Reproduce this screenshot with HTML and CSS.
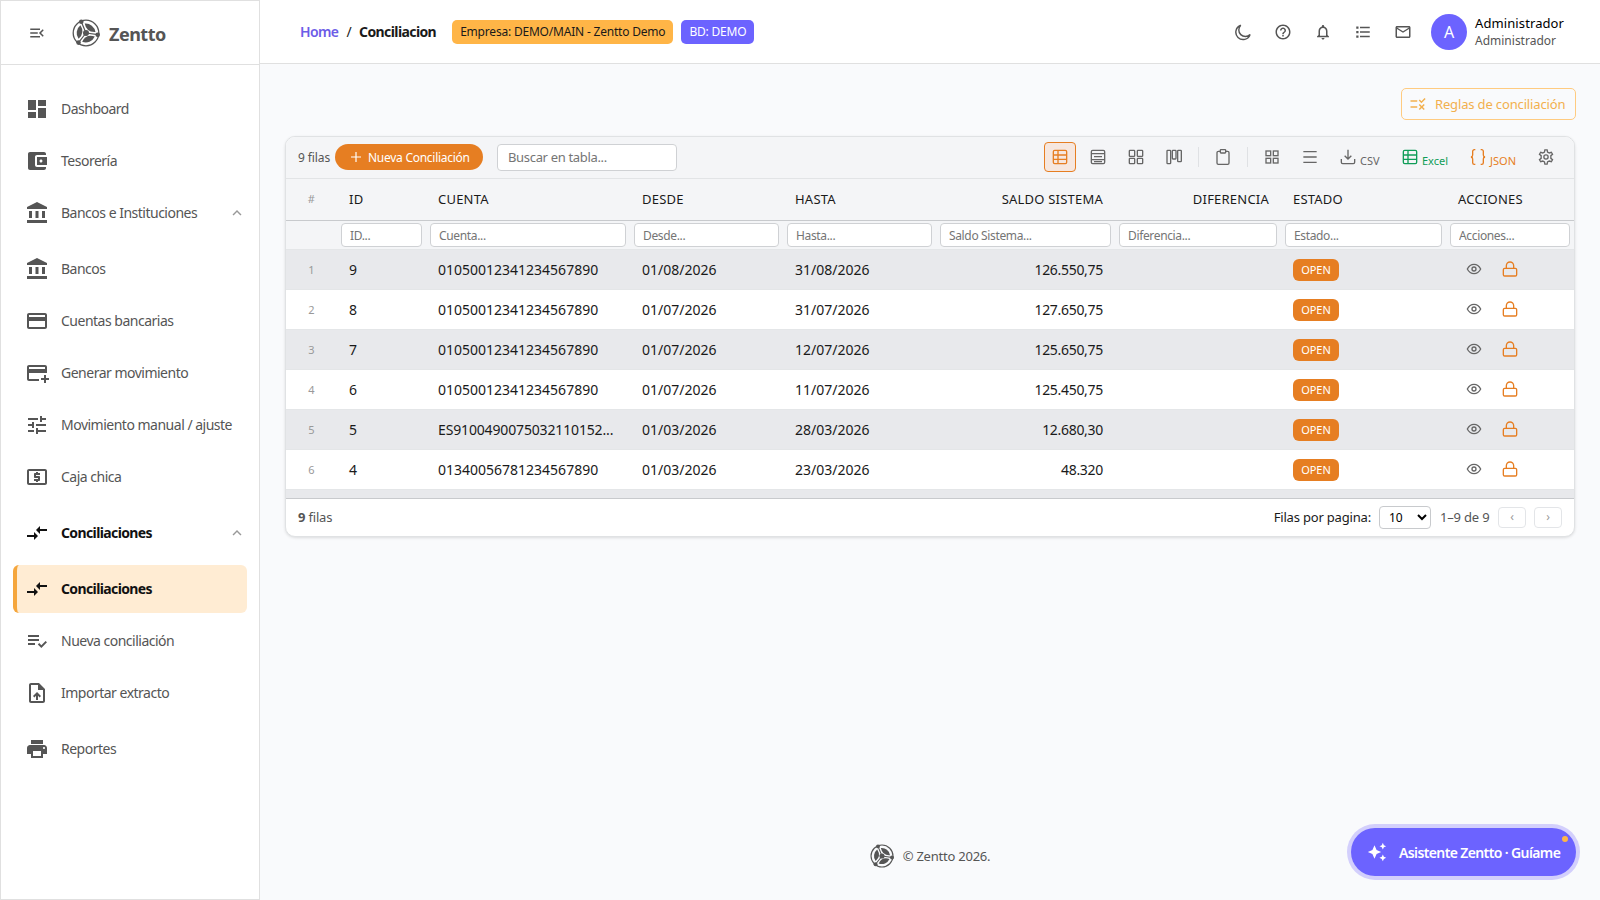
FILE: index.html
```html
<!DOCTYPE html>
<html lang="es">
<head>
    <meta charset="UTF-8">
    <meta name="viewport" content="width=device-width, initial-scale=1.0">
    <title>Conciliacion - Zentto</title>
    <link rel="stylesheet" href="styles.css">
</head>
<body>

<!-- Shared icons -->
<svg class="sprite">
    <symbol id="logo" viewBox="0 0 28 28">
        <circle cx="14" cy="14" r="12.8" fill="none" stroke="currentColor" stroke-width="1.3"/>
        <g transform="rotate(68 14 14)"><path d="M20.6 7.2A9.8 9.8 0 0 1 20.6 20.8Q14.6 14 20.6 7.2z"/></g>
        <g transform="rotate(188 14 14)"><path d="M20.6 7.2A9.8 9.8 0 0 1 20.6 20.8Q14.6 14 20.6 7.2z"/></g>
        <g transform="rotate(308 14 14)"><path d="M20.6 7.2A9.8 9.8 0 0 1 20.6 20.8Q14.6 14 20.6 7.2z"/></g>
        <path d="M14 14L9.3 2.8M14 14L26 15.7M14 14L6.5 23.6" stroke="currentColor" stroke-width="1.2"/>
        <circle cx="14" cy="14" r="3"/>
        <circle cx="9.3" cy="2.8" r="2.3"/>
        <circle cx="25.7" cy="15.7" r="2.3"/>
        <circle cx="6.5" cy="23.6" r="2.3"/>
    </symbol>
    <symbol id="bank" viewBox="0 0 24 24"><path d="M4 10h3v7H4zm6.5 0h3v7h-3zM2 19h20v3H2zm15-9h3v7h-3zm-5-9L2 6v2h20V6z"/></symbol>
    <symbol id="arrows" viewBox="0 0 24 24"><path d="M9.01 14H2v2h7.01v3L13 15l-3.99-4v3zm5.98-1v-3H22V8h-7.01V5L11 9l3.99 4z"/></symbol>
    <symbol id="up" viewBox="0 0 24 24"><path d="m12 8-6 6 1.41 1.41L12 10.83l4.59 4.58L18 14z"/></symbol>
    <symbol id="eye" viewBox="0 0 24 24"><path d="M2 12s3.6-7 10-7 10 7 10 7-3.6 7-10 7-10-7-10-7z"/><circle cx="12" cy="12" r="3"/></symbol>
    <symbol id="lock" viewBox="0 0 24 24"><rect x="2" y="11" width="20" height="11.5" rx="2"/><path d="M6.5 11V7a5.5 5.5 0 0 1 11 0v4"/></symbol>
    <symbol id="grid" viewBox="0 0 24 24"><rect x="3" y="3" width="7" height="7"/><rect x="14" y="3" width="7" height="7"/><rect x="3" y="14" width="7" height="7"/><rect x="14" y="14" width="7" height="7"/></symbol>
    <symbol id="table" viewBox="0 0 24 24"><rect x="2" y="2" width="20" height="20" rx="2"/><path d="M2 9h20M2 15.5h20M9 2v20"/></symbol>
</svg>

<div class="app">
    <aside class="sidebar">
        <div class="brand">
            <svg class="menu-icon" viewBox="0 0 24 24"><path d="M3 18h13v-2H3v2zm0-5h10v-2H3v2zm0-7v2h13V6H3zm18 9.59L17.42 12 21 8.41 19.59 7l-5 5 5 5L21 15.59z"/></svg>
            <svg class="brand-logo"><use href="#logo"/></svg>
            <span class="brand-name">Zentto</span>
        </div>
        <nav class="menu">
            <a class="item"><svg viewBox="0 0 24 24"><path d="M3 13h8V3H3v10zm0 8h8v-6H3v6zm10 0h8V11h-8v10zm0-18v6h8V3h-8z"/></svg><span>Dashboard</span></a>
            <a class="item"><svg viewBox="0 0 24 24"><path d="M21 18v1c0 1.1-.9 2-2 2H5c-1.11 0-2-.9-2-2V5c0-1.1.89-2 2-2h14c1.1 0 2 .9 2 2v1h-9c-1.11 0-2 .9-2 2v8c0 1.1.89 2 2 2h9zm-9-2h10V8H12v8zm4-2.5c-.83 0-1.5-.67-1.5-1.5s.67-1.5 1.5-1.5 1.5.67 1.5 1.5-.67 1.5-1.5 1.5z"/></svg><span>Tesorería</span></a>
            <a class="item"><svg><use href="#bank"/></svg><span>Bancos e Instituciones</span><svg class="chevron"><use href="#up"/></svg></a>
            <div class="submenu">
                <a class="item"><svg><use href="#bank"/></svg><span>Bancos</span></a>
                <a class="item"><svg viewBox="0 0 24 24"><path d="M20 4H4c-1.11 0-1.99.89-1.99 2L2 18c0 1.11.89 2 2 2h16c1.11 0 2-.89 2-2V6c0-1.11-.89-2-2-2zm0 14H4v-6h16v6zm0-10H4V6h16v2z"/></svg><span>Cuentas bancarias</span></a>
                <a class="item"><svg viewBox="0 0 24 24"><path d="M20 4H4c-1.11 0-1.99.89-1.99 2L2 18c0 1.11.89 2 2 2h10v-2H4v-6h18V6c0-1.11-.89-2-2-2zm0 4H4V6h16v2zm4 9v2h-3v3h-2v-3h-3v-2h3v-3h2v3h3z"/></svg><span>Generar movimiento</span></a>
                <a class="item"><svg viewBox="0 0 24 24"><path d="M3 17v2h6v-2H3zM3 5v2h10V5H3zm10 16v-2h8v-2h-8v-2h-2v6h2zM7 9v2H3v2h4v2h2V9H7zm14 4v-2H11v2h10zm-6-4h2V7h4V5h-4V3h-2v6z"/></svg><span>Movimiento manual / ajuste</span></a>
                <a class="item"><svg viewBox="0 0 24 24"><path d="M11 17h2v-1h1c.55 0 1-.45 1-1v-3c0-.55-.45-1-1-1h-3v-1h4V8h-2V7h-2v1h-1c-.55 0-1 .45-1 1v3c0 .55.45 1 1 1h3v1H9v2h2v1zm9-13H4c-1.11 0-1.99.89-1.99 2L2 18c0 1.11.89 2 2 2h16c1.11 0 2-.89 2-2V6c0-1.11-.89-2-2-2zm0 14H4V6h16v12z"/></svg><span>Caja chica</span></a>
            </div>
            <a class="item open"><svg><use href="#arrows"/></svg><span>Conciliaciones</span><svg class="chevron"><use href="#up"/></svg></a>
            <div class="submenu">
                <a class="item active"><svg><use href="#arrows"/></svg><span>Conciliaciones</span></a>
                <a class="item"><svg viewBox="0 0 24 24"><path d="M3 10h11v2H3zm0-4h11v2H3zm0 8h7v2H3zm17.59-2.07-4.25 4.24-2.12-2.12-1.41 1.41L16.34 19 22 13.34z"/></svg><span>Nueva conciliación</span></a>
                <a class="item"><svg viewBox="0 0 24 24"><path d="M14 2H6c-1.1 0-1.99.9-1.99 2L4 20c0 1.1.89 2 1.99 2H18c1.1 0 2-.9 2-2V8l-6-6zm4 18H6V4h7v5h5v11zM8 15.01l1.41 1.41L11 14.84V19h2v-4.16l1.59 1.59L16 15.01 12.01 11 8 15.01z"/></svg><span>Importar extracto</span></a>
            </div>
            <a class="item"><svg viewBox="0 0 24 24"><path d="M19 8H5c-1.66 0-3 1.34-3 3v6h4v4h12v-4h4v-6c0-1.66-1.34-3-3-3zm-3 11H8v-5h8v5zm3-7c-.55 0-1-.45-1-1s.45-1 1-1 1 .45 1 1-.45 1-1 1zm-1-9H6v4h12V3z"/></svg><span>Reportes</span></a>
        </nav>
    </aside>

    <div class="main">
        <header class="topbar">
            <div class="breadcrumb">
                <a class="home">Home</a><span class="slash">/</span><b class="current">Conciliacion</b>
            </div>
            <span class="tag company">Empresa: DEMO/MAIN - Zentto Demo</span>
            <span class="tag db">BD: DEMO</span>
            <div class="top-icons">
                <svg class="stroke" viewBox="0 0 24 24"><path d="M21.5 15.5A8.5 8.5 0 0 1 9 3 9.8 9.8 0 1 0 21.5 15.5z"/></svg>
                <svg viewBox="0 0 24 24"><path d="M11 18h2v-2h-2v2zm1-16C6.48 2 2 6.48 2 12s4.48 10 10 10 10-4.48 10-10S17.52 2 12 2zm0 18c-4.41 0-8-3.59-8-8s3.59-8 8-8 8 3.59 8 8-3.59 8-8 8zm0-14c-2.21 0-4 1.79-4 4h2c0-1.1.9-2 2-2s2 .9 2 2c0 2-3 1.75-3 5h2c0-2.25 3-2.5 3-5 0-2.21-1.79-4-4-4z"/></svg>
                <svg viewBox="0 0 24 24"><path d="M12 22c1.1 0 2-.9 2-2h-4c0 1.1.89 2 2 2zm6-6v-5c0-3.07-1.64-5.64-4.5-6.32V4c0-.83-.67-1.5-1.5-1.5s-1.5.67-1.5 1.5v.68C7.63 5.36 6 7.92 6 11v5l-2 2v1h16v-1l-2-2zm-2 1H8v-6c0-2.48 1.51-4.5 4-4.5s4 2.02 4 4.5v6z"/></svg>
                <svg viewBox="0 0 24 24"><path d="M3 4.5h3v3H3zM3 10.5h3v3H3zM3 16.5h3v3H3zM8 5h13v2H8zM8 11h13v2H8zM8 17h13v2H8z"/></svg>
                <svg viewBox="0 0 24 24"><path d="M22 6c0-1.1-.9-2-2-2H4c-1.1 0-2 .9-2 2v12c0 1.1.9 2 2 2h16c1.1 0 2-.9 2-2V6zm-2 0-8 5-8-5h16zm0 12H4V8l8 5 8-5v10z"/></svg>
            </div>
            <div class="avatar">A</div>
            <div class="user">
                <div class="user-name">Administrador</div>
                <div class="user-role">Administrador</div>
            </div>
        </header>

        <div class="content">
            <div class="actions">
                <button class="rules-btn"><svg viewBox="0 0 24 24"><path d="M16.54 11L13 7.46l1.41-1.41 2.12 2.12 4.24-4.24 1.41 1.41L16.54 11zM11 7H2v2h9V7zm10 6.41L19.59 12 17 14.59 14.41 12 13 13.41 15.59 16 13 18.59 14.41 20 17 17.41 19.59 20 21 18.59 18.41 16 21 13.41zM11 15H2v2h9v-2z"/></svg><span>Reglas de conciliación</span></button>
            </div>

            <div class="grid-card">
                <div class="toolbar">
                    <span class="count">9 filas</span>
                    <button class="new-btn"><svg viewBox="0 0 12 12"><path d="M6 1v10M1 6h10"/></svg><span>Nueva Conciliación</span></button>
                    <input class="search" type="text" placeholder="Buscar en tabla...">
                    <div class="tools">
                        <button class="tool selected"><svg><use href="#table"/></svg></button>
                        <button class="tool"><svg viewBox="0 0 24 24"><rect x="2" y="2" width="20" height="20" rx="2"/><path d="M2 7h20M6 11.5h12M2 16h20M6 19h12"/></svg></button>
                        <button class="tool"><svg viewBox="0 0 24 24"><rect x="2" y="2" width="8" height="9" rx="1"/><rect x="14" y="2" width="8" height="9" rx="1"/><rect x="2" y="14" width="8" height="8" rx="1"/><rect x="14" y="14" width="8" height="8" rx="1"/></svg></button>
                        <button class="tool"><svg viewBox="0 0 24 24"><rect x="1.5" y="2" width="5.5" height="20" rx="1"/><rect x="9.5" y="2" width="5.5" height="13" rx="1"/><rect x="17.5" y="2" width="5.5" height="17" rx="1"/></svg></button>
                        <span class="divider"></span>
                        <button class="tool"><svg viewBox="0 0 24 24"><path d="M16 3.500h3a2 2 0 0 1 2 2v15.500a2 2 0 0 1-2 2H5a2 2 0 0 1-2-2V5.500a2 2 0 0 1 2-2h3"/><rect x="8" y="1" width="8" height="5" rx="1"/></svg></button>
                        <span class="divider"></span>
                        <button class="tool"><svg><use href="#grid"/></svg></button>
                        <button class="tool"><svg viewBox="0 0 24 24"><path d="M2 4h20M2 12h20M2 20h20"/></svg></button>
                        <button class="tool export"><svg viewBox="0 0 24 24"><path d="M2 15v5a2 2 0 0 0 2 2h16a2 2 0 0 0 2-2v-5M7 10l5 5 5-5M12 15V1"/></svg><span>CSV</span></button>
                        <button class="tool export excel"><svg><use href="#table"/></svg><span>Excel</span></button>
                        <button class="tool export json"><svg viewBox="0 0 24 24"><path d="M8 1H6.500a2.500 2.500 0 0 0-2.500 2.500V9a3 3 0 0 1-2.500 3A3 3 0 0 1 4 15v5.500A2.500 2.500 0 0 0 6.500 23H8M16 1h1.500A2.500 2.500 0 0 1 20 3.500V9a3 3 0 0 0 2.500 3A3 3 0 0 0 20 15v5.500a2.500 2.500 0 0 1-2.500 2.500H16"/></svg><span>JSON</span></button>
                        <button class="tool"><svg viewBox="0 0 24 24"><path d="M9.700 4.500 10.300 1.300h3.400l.6 3.200 2.600 1.500 3.100-1.100 1.800 3-2.500 2.100v4l2.500 2.100-1.800 3-3.100-1.100-2.600 1.500-.6 3.200h-3.400l-.6-3.200-2.600-1.500L4 19.100l-1.800-3L4.700 14v-4L2.200 7.900 4 4.900 7.100 6z"/><circle cx="12" cy="12" r="3.200"/></svg></button>
                    </div>
                </div>

                <div class="row head">
                    <div class="num">#</div><div>ID</div><div>CUENTA</div><div>DESDE</div><div>HASTA</div><div class="right">SALDO SISTEMA</div><div class="right">DIFERENCIA</div><div>ESTADO</div><div>ACCIONES</div>
                </div>
                <div class="row filters">
                    <span></span>
                    <input type="text" placeholder="ID...">
                    <input type="text" placeholder="Cuenta...">
                    <input type="text" placeholder="Desde...">
                    <input type="text" placeholder="Hasta...">
                    <input type="text" placeholder="Saldo Sistema...">
                    <input type="text" placeholder="Diferencia...">
                    <input type="text" placeholder="Estado...">
                    <input type="text" placeholder="Acciones...">
                </div>
                <div class="rows">
                    <div class="row"><div class="num">1</div><div>9</div><div>01050012341234567890</div><div>01/08/2026</div><div>31/08/2026</div><div class="right">126.550,75</div><div></div><div><span class="status">OPEN</span></div><div class="ops"><svg><use href="#eye"/></svg><svg class="lock"><use href="#lock"/></svg></div></div>
                    <div class="row"><div class="num">2</div><div>8</div><div>01050012341234567890</div><div>01/07/2026</div><div>31/07/2026</div><div class="right">127.650,75</div><div></div><div><span class="status">OPEN</span></div><div class="ops"><svg><use href="#eye"/></svg><svg class="lock"><use href="#lock"/></svg></div></div>
                    <div class="row"><div class="num">3</div><div>7</div><div>01050012341234567890</div><div>01/07/2026</div><div>12/07/2026</div><div class="right">125.650,75</div><div></div><div><span class="status">OPEN</span></div><div class="ops"><svg><use href="#eye"/></svg><svg class="lock"><use href="#lock"/></svg></div></div>
                    <div class="row"><div class="num">4</div><div>6</div><div>01050012341234567890</div><div>01/07/2026</div><div>11/07/2026</div><div class="right">125.450,75</div><div></div><div><span class="status">OPEN</span></div><div class="ops"><svg><use href="#eye"/></svg><svg class="lock"><use href="#lock"/></svg></div></div>
                    <div class="row"><div class="num">5</div><div>5</div><div class="iban">ES9100490075032110152...</div><div>01/03/2026</div><div>28/03/2026</div><div class="right">12.680,30</div><div></div><div><span class="status">OPEN</span></div><div class="ops"><svg><use href="#eye"/></svg><svg class="lock"><use href="#lock"/></svg></div></div>
                    <div class="row"><div class="num">6</div><div>4</div><div>01340056781234567890</div><div>01/03/2026</div><div>23/03/2026</div><div class="right">48.320</div><div></div><div><span class="status">OPEN</span></div><div class="ops"><svg><use href="#eye"/></svg><svg class="lock"><use href="#lock"/></svg></div></div>
                    <div class="row"></div>
                </div>

                <div class="pager">
                    <span class="total"><b>9</b> filas</span>
                    <span class="per-page">Filas por pagina:</span>
                    <select><option>10</option></select>
                    <span class="range">1–9 de 9</span>
                    <button class="page-btn">‹</button>
                    <button class="page-btn">›</button>
                </div>
            </div>
        </div>

        <footer class="footer"><svg><use href="#logo"/></svg><span>© Zentto 2026.</span></footer>
    </div>
</div>

<button class="assistant">
    <svg viewBox="0 0 24 24"><path d="M19 9l1.250-2.750L23 5l-2.750-1.250L19 1l-1.250 2.750L15 5l2.750 1.250L19 9zm-7.500.5L9 4 6.500 9.500 1 12l5.500 2.500L9 20l2.500-5.500L17 12l-5.500-2.500zM19 15l-1.250 2.750L15 19l2.750 1.250L19 23l1.250-2.750L23 19l-2.750-1.250L19 15z"/></svg>
    <span>Asistente Zentto · Guíame</span>
    <i class="dot"></i>
</button>

</body>
</html>
```
FILE: styles.css
```css
* {
    box-sizing: border-box;
}

body {
    margin: 0;
    font-family: "Noto Sans", "Open Sans", sans-serif;
    font-size: 14px;
    color: #1a1a1a;
    background-color: #f9fafc;
    overflow: hidden;
}

svg {
    display: block;
    flex-shrink: 0;
    fill: currentColor;
}

button, input, select {
    font-family: inherit;
    margin: 0;
}

.sprite {
    display: none;
}

.app {
    display: flex;
    height: 900px;
}

/* Sidebar */
.sidebar {
    width: 260px;
    flex-shrink: 0;
    background-color: #fff;
    border: 1px solid #e0e0e0;
}

.brand {
    height: 64px;
    display: flex;
    align-items: center;
    padding-left: 27px;
    border-bottom: 1px solid #e0e0e0;
    color: #555;
}

.menu-icon {
    width: 18px;
    height: 18px;
}

.brand-logo {
    width: 28px;
    height: 28px;
    margin-left: 26px;
}

.brand-name {
    margin-left: 9px;
    font-size: 18px;
    font-weight: 700;
    letter-spacing: -0.5px;
    padding-top: 2px;
}

.menu {
    padding: 20px 12px 0;
}

.item {
    display: flex;
    align-items: center;
    height: 48px;
    margin-bottom: 4px;
    padding: 0 0 0 12px;
    border-radius: 6px;
    color: #555;
    letter-spacing: -0.5px;
    white-space: nowrap;
}

.item svg {
    width: 24px;
    height: 24px;
}

.item span {
    margin-left: 12px;
    padding-bottom: 1px;
}

.item .chevron {
    width: 18px;
    height: 18px;
    margin-left: auto;
    margin-right: 1px;
    color: #999;
}

.submenu {
    padding: 4px 0;
}

.item.open, .item.active {
    color: #111;
    font-weight: 700;
    letter-spacing: -0.62px;
}

.item.active {
    background-color: #ffecd3;
    border-left: 4px solid #f5a63c;
    padding-left: 8px;
}

/* Top bar */
.main {
    flex: 1;
    min-width: 0;
    display: flex;
    flex-direction: column;
}

.topbar {
    height: 64px;
    display: flex;
    align-items: center;
    padding: 0 36px 0 40px;
    background-color: #fff;
    border-bottom: 1px solid #e0e0e0;
}

.breadcrumb {
    display: flex;
    gap: 8px;
    margin-right: 16px;
    letter-spacing: -0.6px;
}

.home {
    color: #6c5ce7;
    font-weight: 600;
}

.tag {
    height: 24px;
    line-height: 23px;
    padding: 0 8px;
    border-radius: 5px;
    font-size: 12px;
    letter-spacing: -0.2px;
    white-space: nowrap;
}

.company {
    background-color: #ffb547;
    margin-right: 8px;
}

.db {
    background-color: #6c63ff;
    color: #fff;
}

.top-icons {
    display: flex;
    gap: 22px;
    margin-left: auto;
    color: #555;
}

.top-icons svg {
    width: 18px;
    height: 18px;
}

.top-icons .stroke {
    fill: none;
    stroke: currentColor;
    stroke-width: 1.9;
}

.avatar {
    width: 36px;
    height: 36px;
    margin: 0 8px 0 19px;
    border-radius: 50%;
    background-color: #6c63ff;
    color: #fff;
    font-size: 16px;
    line-height: 37px;
    text-align: center;
}

.user {
    width: 89px;
    line-height: 17px;
}

.user-name {
    font-size: 13px;
    color: #000;
    letter-spacing: 0.1px;
}

.user-role {
    font-size: 12px;
    color: #555;
}

/* Content */
.content {
    flex: 1;
    padding: 24px 24px 0 25px;
}

.actions {
    display: flex;
    justify-content: flex-end;
    margin-bottom: 16px;
}

.rules-btn {
    width: 175px;
    height: 32px;
    display: flex;
    align-items: center;
    gap: 8px;
    padding: 0 7px;
    border: 1px solid #ffcb80;
    border-radius: 5px;
    background: none;
    color: #f2b04e;
    font-size: 13px;
    letter-spacing: -0.15px;
    white-space: nowrap;
}

.rules-btn svg {
    width: 18px;
    height: 18px;
}

.grid-card {
    margin-right: 1px;
    border: 1px solid #e0e2e4;
    border-radius: 10px;
    background-color: #fff;
    box-shadow: 0 1px 3px rgba(0, 0, 0, 0.12);
    overflow: hidden;
}

.toolbar {
    height: 42px;
    display: flex;
    align-items: center;
    padding: 0 12px 1px;
    background-color: #f4f5f7;
    border-bottom: 1px solid #e2e4e6;
}

.count {
    width: 37px;
    font-size: 12px;
    letter-spacing: -0.1px;
    color: #555;
    white-space: nowrap;
}

.new-btn {
    width: 148px;
    height: 26px;
    display: flex;
    align-items: center;
    gap: 6px;
    padding: 0 0 0 15px;
    border: none;
    border-radius: 13px;
    background-color: #e67e22;
    color: #fff;
    font-size: 12px;
    letter-spacing: -0.27px;
    white-space: nowrap;
}

.new-btn svg {
    width: 12px;
    height: 12px;
    stroke: #fff;
    stroke-width: 1.2;
}

.search {
    width: 180px;
    height: 27px;
    margin-left: 14px;
    padding: 0 10px;
    border: 1px solid #cfd1d4;
    border-radius: 4px;
    font-size: 13px;
    letter-spacing: -0.33px;
}

.tools {
    display: flex;
    align-items: center;
    gap: 6px;
    margin-left: auto;
}

.tool {
    width: 32px;
    height: 30px;
    display: flex;
    align-items: center;
    justify-content: center;
    padding: 0;
    border: 1px solid transparent;
    border-radius: 4px;
    background: none;
    color: #666;
}

.tool svg {
    width: 16px;
    height: 16px;
}

.tool svg, .ops svg {
    fill: none;
    stroke: currentColor;
    stroke-width: 2;
}

.tool.selected {
    border-color: #e67e22;
    background-color: #f6e7df;
    color: #e67e22;
}

.tool.export {
    width: 56px;
    justify-content: flex-start;
    padding: 0 7px;
    gap: 4px;
    font-size: 11px;
}

.export span {
    margin-top: 7px;
}

.tool.excel, .tool.json {
    width: 62px;
}

.tool.excel {
    color: #0f9d58;
}

.tool.json {
    color: #e67e22;
}

.divider {
    width: 1px;
    height: 20px;
    margin: 0 2px;
    background-color: #dfe1e4;
}

/* Table */
.row {
    display: grid;
    grid-template-columns: 51px 89px 204px 153px 153px 179px 166px 165px 128px;
    align-items: center;
    height: 40px;
    border-bottom: 1px solid #e4e6e8;
}

.row > div {
    padding: 0 12px;
    white-space: nowrap;
}

.row .right {
    text-align: right;
    letter-spacing: -0.3px;
}

.row .num {
    font-size: 11px;
    color: #999;
    text-align: center;
}

.row.head {
    height: 42px;
    padding-bottom: 2px;
    background-color: #f4f5f7;
    border-bottom: 1px solid #c8cacd;
    font-size: 13px;
}

.row.head > div {
    letter-spacing: 0.22px;
}

.row.filters {
    height: 29px;
    background-color: #f4f5f7;
}

.filters input {
    min-width: 0;
    height: 24px;
    margin: 0 4px;
    padding: 0 8px;
    border: 1px solid #cfd1d4;
    border-radius: 4px;
    font-size: 12px;
    letter-spacing: -0.35px;
}

input::placeholder {
    color: #757575;
}

.rows {
    height: 248px;
    overflow: hidden;
}

.rows .row:nth-child(odd) {
    background-color: #e8e9ec;
}

.iban {
    letter-spacing: -0.15px;
}

.status {
    display: block;
    width: 46px;
    height: 22px;
    line-height: 22px;
    border-radius: 6px;
    background-color: #e67e22;
    color: #fff;
    font-size: 11px;
    letter-spacing: -0.1px;
    text-align: center;
}

.ops {
    display: flex;
    gap: 20px;
    color: #666;
}

.row .ops {
    padding: 0 0 1px 20px;
}

.ops svg {
    width: 16px;
    height: 16px;
}

.ops .lock {
    color: #e67e22;
}

.pager {
    height: 38px;
    display: flex;
    align-items: center;
    padding: 0 12px 1px;
    border-top: 1px solid #c8cacd;
    font-size: 13px;
    letter-spacing: -0.18px;
}

.total {
    margin-right: auto;
    color: #555;
}

.pager select {
    width: 52px;
    height: 23px;
    margin: 0 9px 0 8px;
    padding: 0 5px;
    border: 1px solid #c8cacd;
    border-radius: 4px;
    background-color: #fff;
    font-size: 12px;
}

.range {
    width: 50px;
    color: #555;
    white-space: nowrap;
}

.page-btn {
    width: 28px;
    height: 21px;
    margin-left: 8px;
    padding: 0;
    border: 1px solid #e3e5e8;
    border-radius: 4px;
    background-color: #fff;
    color: #999;
    font-size: 12px;
    line-height: 18px;
}

.footer {
    display: flex;
    align-items: center;
    justify-content: center;
    gap: 9px;
    padding: 0 0 32px;
    color: #555;
    font-size: 13px;
    letter-spacing: -0.23px;
}

.footer svg {
    width: 24px;
    height: 24px;
}

/* Floating assistant button */
.assistant {
    position: absolute;
    left: 1351px;
    top: 828px;
    width: 225px;
    height: 48px;
    display: flex;
    align-items: center;
    padding: 0 16px;
    border: none;
    border-radius: 24px;
    background-color: #6c63ff;
    box-shadow: 0 0 0 4px #d3cffc;
    color: #fff;
    font-size: 14px;
    font-weight: 600;
    letter-spacing: -0.62px;
    white-space: nowrap;
}

.assistant svg {
    width: 20px;
    height: 20px;
    margin-right: 12px;
}

.dot {
    position: absolute;
    right: 8px;
    top: 8px;
    width: 6px;
    height: 6px;
    border-radius: 50%;
    background-color: #ffb547;
}
```
